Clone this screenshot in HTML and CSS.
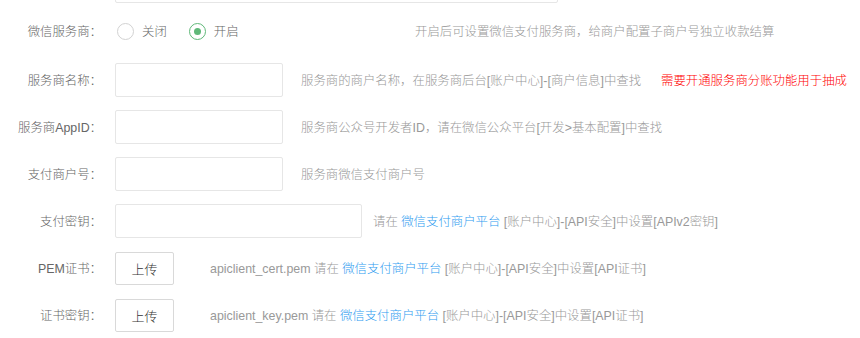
FILE: index.html
```html
<!DOCTYPE html>
<html lang="zh-CN">
<head>
<meta charset="utf-8">
<title>微信服务商设置</title>
<link rel="stylesheet" href="styles.css">
</head>
<body>
<div class="form">
  <div class="row">
    <div class="label"></div>
    <div class="input input-xl"></div>
  </div>

  <div class="row row-radio">
    <div class="label">微信服务商：</div>
    <div class="radios">
      <span class="radio"><i class="dot"></i><span>关闭</span></span>
      <span class="radio checked"><i class="dot"></i><span>开启</span></span>
    </div>
    <div class="help">开启后可设置微信支付服务商，给商户配置子商户号独立收款结算</div>
  </div>

  <div class="row">
    <div class="label">服务商名称：</div>
    <div class="input"></div>
    <div class="help gap-md">服务商的商户名称，在服务商后台[账户中心]-[商户信息]中查找<span class="warn">需要开通服务商分账功能用于抽成</span></div>
  </div>

  <div class="row">
    <div class="label">服务商AppID：</div>
    <div class="input"></div>
    <div class="help gap-md">服务商公众号开发者ID，请在微信公众平台[开发&gt;基本配置]中查找</div>
  </div>

  <div class="row">
    <div class="label">支付商户号：</div>
    <div class="input"></div>
    <div class="help gap-md">服务商微信支付商户号</div>
  </div>

  <div class="row">
    <div class="label">支付密钥：</div>
    <div class="input input-lg"></div>
    <div class="help gap-sm">请在 <a class="link">微信支付商户平台</a> [账户中心]-[API安全]中设置[APIv2密钥]</div>
  </div>

  <div class="row">
    <div class="label">PEM证书：</div>
    <div class="btn">上传</div>
    <div class="help gap-lg">apiclient_cert.pem 请在 <a class="link">微信支付商户平台</a> [账户中心]-[API安全]中设置[API证书]</div>
  </div>

  <div class="row">
    <div class="label">证书密钥：</div>
    <div class="btn">上传</div>
    <div class="help gap-lg">apiclient_key.pem 请在 <a class="link">微信支付商户平台</a> [账户中心]-[API安全]中设置[API证书]</div>
  </div>
</div>
</body>
</html>
```

FILE: styles.css
```css
html, body {
  margin: 0;
  padding: 0;
  background: #fff;
}

body {
  font-family: "Liberation Sans", "Noto Sans CJK SC", sans-serif;
  font-size: 12.4px;
  font-weight: 300;
  color: #666;
  overflow: hidden;
}

.form {
  display: flex;
  flex-direction: column;
  gap: 13px;
  margin-top: -31px;
}

.row {
  display: flex;
  align-items: center;
  height: 34px;
  white-space: nowrap;
}

.row-radio {
  height: 30px;
  margin-bottom: 4px;
}

.label {
  width: 102px;
  margin-right: 13px;
  text-align: right;
  color: #666;
  flex: none;
}

.input {
  width: 166px;
  height: 32px;
  border: 1px solid #e6e6e6;
  border-radius: 2px;
  background: #fff;
  flex: none;
}

.input-lg {
  width: 245px;
}

.input-xl {
  width: 441px;
}

.radios {
  display: flex;
  align-items: center;
  width: 300px;
  flex: none;
}

.radio {
  display: inline-flex;
  align-items: center;
  color: #666;
  margin-right: 20px;
}

.radio span {
  margin-left: 8px;
}

.dot {
  box-sizing: border-box;
  width: 17px;
  height: 17px;
  border: 1px solid #d2d2d2;
  border-radius: 50%;
  position: relative;
  margin-left: 2px;
}

.checked .dot {
  border-color: #5fb878;
}

.checked .dot::after {
  content: "";
  position: absolute;
  left: 4px;
  top: 4px;
  width: 7px;
  height: 7px;
  border-radius: 50%;
  background: #5fb878;
}

.help {
  color: #999;
}

.gap-md {
  margin-left: 18px;
}

.gap-sm {
  margin-left: 11px;
}

.gap-lg {
  margin-left: 36px;
}

.warn {
  color: #f00;
  margin-left: 20px;
}

.link {
  color: #2f9cf0;
  text-decoration: none;
}

.btn {
  box-sizing: border-box;
  width: 59px;
  height: 33px;
  border: 1px solid #d9d9d9;
  border-radius: 2px;
  display: flex;
  align-items: center;
  justify-content: center;
  color: #333;
  font-size: 13px;
  flex: none;
}
```
